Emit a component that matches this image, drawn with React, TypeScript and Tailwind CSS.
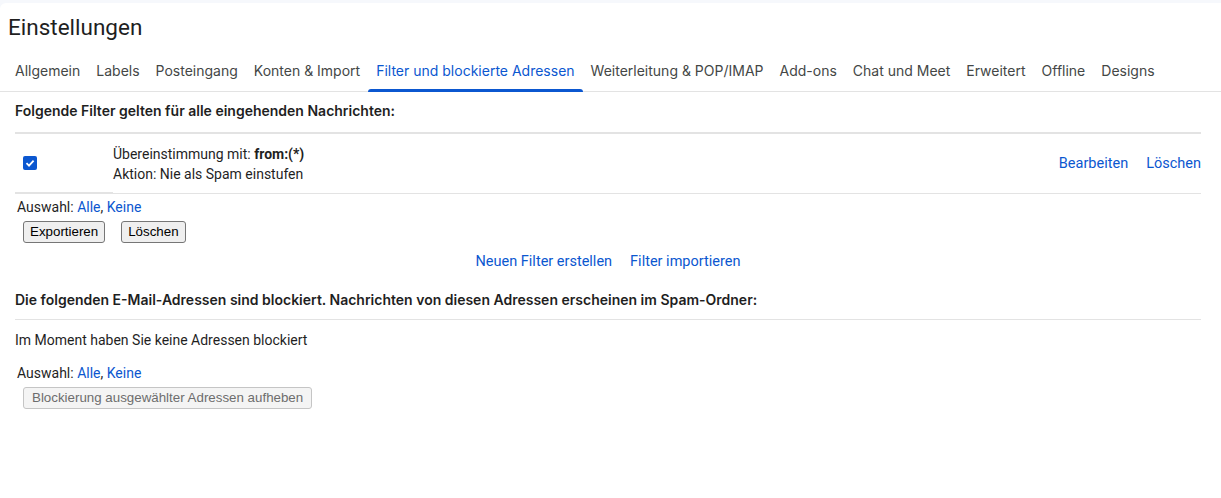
import React from 'react';

const tabs = [
  'Allgemein',
  'Labels',
  'Posteingang',
  'Konten & Import',
  'Filter und blockierte Adressen',
  'Weiterleitung & POP/IMAP',
  'Add-ons',
  'Chat und Meet',
  'Erweitert',
  'Offline',
  'Designs',
];

const ACTIVE = 'Filter und blockierte Adressen';

const Selection: React.FC = () => (
  <div className="pl-[2px] text-[14px] leading-5 text-[#1f1f1f]">
    Auswahl: <a className="text-[#0b57d0] cursor-pointer">Alle</a>,{' '}
    <a className="text-[#0b57d0] cursor-pointer">Keine</a>
  </div>
);

const App: React.FC = () => {
  return (
    <div className="min-h-screen bg-[#f6f8fc] pt-[3px] font-['Roboto',_'Liberation_Sans',_sans-serif]">
      <div className="min-h-[495px] bg-white rounded-tl-[6px]">
        {/* Header */}
        <h1 className="pl-2 pt-[10px] text-[22.5px] leading-7 text-[#1f1f1f]">
          Einstellungen
        </h1>

        {/* Tabs */}
        <div className="mt-[11px] flex border-b border-[#e3e3e3] pl-[7px] font-['Inter',_'Roboto',_sans-serif]">
          {tabs.map((tab) => (
            <div
              key={tab}
              className={`relative flex h-[39px] items-center px-2 pb-[2px] text-[14px] ${
                tab === ACTIVE ? 'text-[#0b57d0]' : 'text-[#444746]'
              }`}
            >
              {tab}
              {tab === ACTIVE && (
                <span className="absolute left-0 right-0 -bottom-[1px] h-[3px] rounded-t-[3px] bg-[#0b57d0]"></span>
              )}
            </div>
          ))}
        </div>

        {/* Content */}
        <div className="pl-[15px] pr-5 text-[#1f1f1f]">
          <h2 className="mt-[9px] text-[14px] font-semibold leading-5 font-['Inter',_'Roboto',_sans-serif]">
            Folgende Filter gelten für alle eingehenden Nachrichten:
          </h2>

          <div className="mt-[11px] border-t-2 border-[#e3e3e3]">
            <div className="flex h-[60px] items-stretch">
              <div className="flex w-[98px] items-center border-b-2 border-[#e3e3e3] pl-2">
                <span className="flex h-[14px] w-[14px] items-center justify-center rounded-[2px] bg-[#0b57d0]">
                  <svg width="10" height="10" viewBox="0 0 10 10">
                    <path d="M1.5 5.2 L4 7.6 L8.6 2.6" fill="none" stroke="white" strokeWidth="1.8" />
                  </svg>
                </span>
              </div>
              <div className="flex flex-1 items-center border-b border-[#e3e3e3]">
                <div className="flex-1 text-[14px] leading-5">
                  <div>
                    Übereinstimmung mit: <b>from:(*)</b>
                  </div>
                  <div>Aktion: Nie als Spam einstufen</div>
                </div>
                <div className="flex gap-[18px] text-[14.5px] text-[#0b57d0]">
                  <a className="cursor-pointer">Bearbeiten</a>
                  <a className="cursor-pointer">Löschen</a>
                </div>
              </div>
            </div>
          </div>

          <div className="mt-[3px]">
            <Selection />
          </div>
          <div className="mt-[4px] flex gap-4 pl-2 font-['Liberation_Sans',_Arial,_sans-serif]">
            <button className="h-[22px] rounded-[3px] border border-[#767676] bg-[#efefef] px-[6px] text-[13.33px] text-black">
              Exportieren
            </button>
            <button className="h-[22px] rounded-[3px] border border-[#767676] bg-[#efefef] px-[6px] text-[13.33px] text-black">
              Löschen
            </button>
          </div>

          <div className="mt-[9px] flex justify-center gap-[18px] text-[14.5px] leading-5 text-[#0b57d0]">
            <a className="cursor-pointer">Neuen Filter erstellen</a>
            <a className="cursor-pointer">Filter importieren</a>
          </div>

          <h2 className="mt-[18px] text-[14px] font-semibold leading-5 font-['Inter',_'Roboto',_sans-serif]">
            Die folgenden E-Mail-Adressen sind blockiert. Nachrichten von diesen Adressen erscheinen im Spam-Ordner:
          </h2>
          <div className="mt-[9px] border-t border-[#e3e3e3]"></div>

          <p className="mt-[10px] text-[14px] leading-5">Im Moment haben Sie keine Adressen blockiert</p>

          <div className="mt-[13px]">
            <Selection />
          </div>
          <div className="mt-[2px] pl-2 font-['Liberation_Sans',_Arial,_sans-serif]">
            <button
              disabled
              className="h-[22px] rounded-[3px] border border-[#c5c5c5] bg-[#f4f4f4] px-[8px] text-[13.33px] text-[#6d6d6d]"
            >
              Blockierung ausgewählter Adressen aufheben
            </button>
          </div>
        </div>
      </div>
    </div>
  );
};

export default App;
